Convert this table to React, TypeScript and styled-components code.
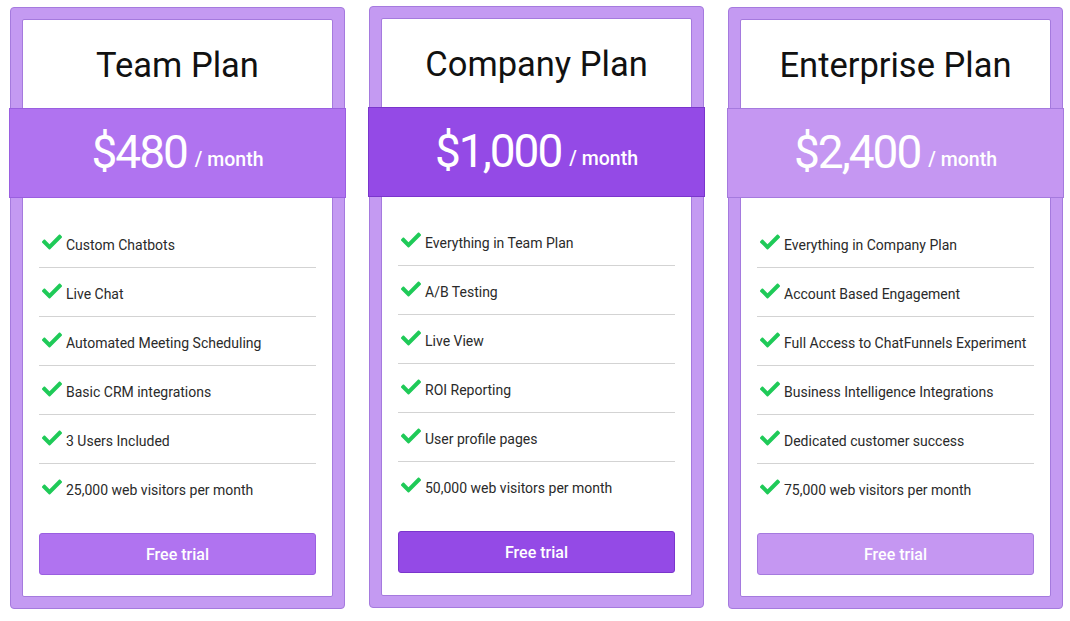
import React from "react";
import styled, { createGlobalStyle } from "styled-components";
import { FaCheck } from "react-icons/fa";

const Global = createGlobalStyle`
  html, body { margin: 0; padding: 0; background: #ffffff; }
  body { font-family: Roboto, "Noto Sans", Arial, sans-serif; }
  * { box-sizing: border-box; }
`;

const Page = styled.div`
  display: flex;
  gap: 24px;
  padding: 7px 7px 0 10px;
  width: 1070px;
  height: 621px;
  align-items: flex-start;
`;

const Card = styled.div<{ $shift: number }>`
  width: 335px;
  height: 602px;
  margin-top: ${(p) => p.$shift}px;
  background: #c49af2;
  border: 1px solid #a57ade;
  border-radius: 4px;
  padding: 11px;
  display: flex;
`;

const Panel = styled.div`
  flex: 1;
  background: #ffffff;
  border: 1px solid #a57ade;
  border-radius: 2px;
  display: flex;
  flex-direction: column;
`;

const Title = styled.h2`
  margin: 0;
  height: 88px;
  display: flex;
  align-items: center;
  justify-content: center;
  padding-top: 2px;
  font-family: Roboto, sans-serif;
  font-weight: 400;
  font-size: 34.5px;
  color: #111111;
`;

const Band = styled.div<{ $bg: string; $edge: string }>`
  margin: 0 -14px;
  height: 90px;
  background: ${(p) => p.$bg};
  border: 1px solid ${(p) => p.$edge};
  display: flex;
  align-items: baseline;
  justify-content: center;
  padding-top: 18px;
  color: #ffffff;
  font-family: Roboto, sans-serif;
`;

const Amount = styled.span`
  font-size: 46px;
  font-weight: 400;
  letter-spacing: -2px;
  line-height: 50px;
`;

const Per = styled.span`
  font-size: 19.5px;
  font-weight: 500;
  margin-left: 8px;
  position: relative;
  top: -2px;
`;

const List = styled.ul<{ $lift: number }>`
  list-style: none;
  margin: 0;
  padding: ${(p) => 21 - p.$lift}px 16px 0;
`;

const Item = styled.li`
  height: 49px;
  display: flex;
  align-items: center;
  gap: 4px;
  padding: 3px 0 0 3px;
  border-bottom: 1px solid #d3d3d3;
  font-size: 14px;
  color: #2a2a2a;
  &:last-child { border-bottom: none; }
  svg { color: #1fca58; flex: none; margin-top: -6px; }
`;

const Button = styled.button<{ $bg: string; $edge: string }>`
  margin: 20px 16px 0;
  height: 42px;
  background: ${(p) => p.$bg};
  border: 1px solid ${(p) => p.$edge};
  border-radius: 3px;
  color: #ffffff;
  font-family: Roboto, sans-serif;
  font-size: 16px;
  font-weight: 500;
  cursor: pointer;
`;

const plans = [
  {
    name: "Team Plan",
    price: "$480",
    bg: "#b073f0",
    edge: "#9a5fe0",
    shift: 0,
    lift: 0,
    features: [
      "Custom Chatbots",
      "Live Chat",
      "Automated Meeting Scheduling",
      "Basic CRM integrations",
      "3 Users Included",
      "25,000 web visitors per month",
    ],
  },
  {
    name: "Company Plan",
    price: "$1,000",
    bg: "#944ae6",
    edge: "#7a35cc",
    shift: -1,
    lift: 1,
    features: [
      "Everything in Team Plan",
      "A/B Testing",
      "Live View",
      "ROI Reporting",
      "User profile pages",
      "50,000 web visitors per month",
    ],
  },
  {
    name: "Enterprise Plan",
    price: "$2,400",
    bg: "#c597f2",
    edge: "#a57ade",
    shift: 0,
    lift: 0,
    features: [
      "Everything in Company Plan",
      "Account Based Engagement",
      "Full Access to ChatFunnels Experiment",
      "Business Intelligence Integrations",
      "Dedicated customer success",
      "75,000 web visitors per month",
    ],
  },
];

export default function App() {
  return (
    <>
      <Global />
      <Page>
        {plans.map((p) => (
          <Card key={p.name} $shift={p.shift}>
            <Panel>
              <Title>{p.name}</Title>
              <Band $bg={p.bg} $edge={p.edge}>
                <Amount>{p.price}</Amount>
                <Per>/ month</Per>
              </Band>
              <List $lift={p.lift}>
                {p.features.map((f) => (
                  <Item key={f}>
                    <FaCheck size={20} />
                    <span>{f}</span>
                  </Item>
                ))}
              </List>
              <Button $bg={p.bg} $edge={p.edge}>Free trial</Button>
            </Panel>
          </Card>
        ))}
      </Page>
    </>
  );
}
